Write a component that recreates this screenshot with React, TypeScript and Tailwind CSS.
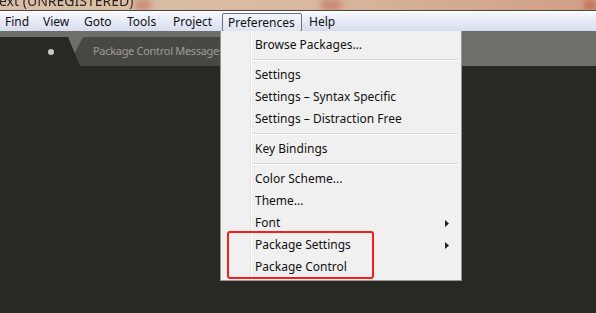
import React from "react";

type Item = { label: string; arrow?: boolean } | "sep";

const items: Item[] = [
  { label: "Browse Packages..." },
  "sep",
  { label: "Settings" },
  { label: "Settings – Syntax Specific" },
  { label: "Settings – Distraction Free" },
  "sep",
  { label: "Key Bindings" },
  "sep",
  { label: "Color Scheme..." },
  { label: "Theme..." },
  { label: "Font", arrow: true },
  { label: "Package Settings", arrow: true },
  { label: "Package Control" },
];

const menuBar = [
  { label: "Find", w: "w-[38px]" },
  { label: "View", w: "w-[41px]" },
  { label: "Goto", w: "w-[43px]" },
  { label: "Tools", w: "w-[46px]" },
  { label: "Project", w: "w-[49px]" },
];

function Arrow() {
  return (
    <svg width="4" height="7" viewBox="0 0 4 7" className="absolute right-[12px] top-[8px]">
      <path d="M0 0 L4 3.5 L0 7 Z" fill="#222" />
    </svg>
  );
}

export default function App() {
  return (
    <div
      className="relative w-[596px] h-[313px] overflow-hidden bg-[#292923] text-[12px]"
      style={{ fontFamily: '"Noto Sans", "Open Sans", sans-serif' }}
    >
      {/* window title bar (blurred) */}
      <div className="h-[10px] overflow-hidden bg-gradient-to-r from-[#d9bfa8] via-[#d8b9a0] to-[#cf9e84]">
        <div className="flex h-[10px]">
          <div className="mt-[-8px] ml-[-1px] text-[14px] leading-[18px] text-[#2a2420] blur-[0.5px] whitespace-nowrap">
            ext (UNREGISTERED)
          </div>
          <div className="ml-[2px] w-[16px] h-[10px] bg-[#c98c74] blur-[3px]" />
          <div className="ml-[170px] w-[20px] h-[10px] bg-[#c8876d] blur-[3px]" />
          <div className="ml-auto w-[12px] h-[10px] bg-[#c5785e] blur-[2px]" />
        </div>
      </div>
      <div className="h-[1px] bg-[#4a4440]" />

      {/* menu bar */}
      <div className="flex h-[20px] items-center pl-[5px] bg-gradient-to-b from-[#f7f8fc] to-[#d6ddf0] text-[#111] border-t border-white">
        {menuBar.map((m) => (
          <div key={m.label} className={`${m.w} leading-[18px]`}>
            {m.label}
          </div>
        ))}
        <div className="w-[80px] h-[19px] mt-[1px] pl-[5px] leading-[17px] rounded-[2px] border border-[#6b7482] bg-gradient-to-b from-[#f3f5fa] to-[#dfe4f0]">
          Preferences
        </div>
        <div className="ml-[7px] leading-[18px]">Help</div>
      </div>

      {/* tab strip */}
      <div className="flex h-[35px] pt-[6px] bg-[#6f6f6a]">
        <div className="relative z-10 w-[80px] h-[29px] bg-[#292923] [clip-path:polygon(0_0,68px_0,80px_100%,0_100%)] flex items-center">
          <div className="ml-[48px] w-[6px] h-[6px] rounded-full bg-[#c8c8c6]" />
        </div>
        <div className="ml-[-12px] w-[220px] h-[29px] bg-[#484843] [clip-path:polygon(15px_0,100%_0,100%_100%,0_100%)] pl-[25px] flex items-center text-[11px] tracking-[-0.3px] text-[#9d9d97] whitespace-nowrap">
          Package Control Messages
        </div>
      </div>

      {/* dropdown menu */}
      <div className="absolute left-[220px] top-[31px] w-[242px] pt-[3px] pb-[2px] bg-[#f0f0f0] border-x border-b border-[#979797] text-[#111]">
        <div className="absolute left-[29px] top-0 bottom-0 w-[1px] bg-[#e2e3e3]" />
        <div className="absolute left-[30px] top-0 bottom-0 w-[1px] bg-white" />
        {items.map((it, i) =>
          it === "sep" ? (
            <div key={i} className="h-[8px] flex flex-col justify-center pl-[31px] pr-[3px]">
              <div className="h-[1px] bg-[#d8d8d8]" />
              <div className="h-[1px] bg-white" />
            </div>
          ) : (
            <div key={i} className="relative h-[22px] pl-[34px] leading-[22px]">
              {it.label}
              {it.arrow && <Arrow />}
            </div>
          )
        )}
      </div>

      {/* red annotation */}
      <div className="absolute left-[227px] top-[231px] w-[147px] h-[48px] border-2 border-[#f4201b] rounded-[3px]" />
    </div>
  );
}
